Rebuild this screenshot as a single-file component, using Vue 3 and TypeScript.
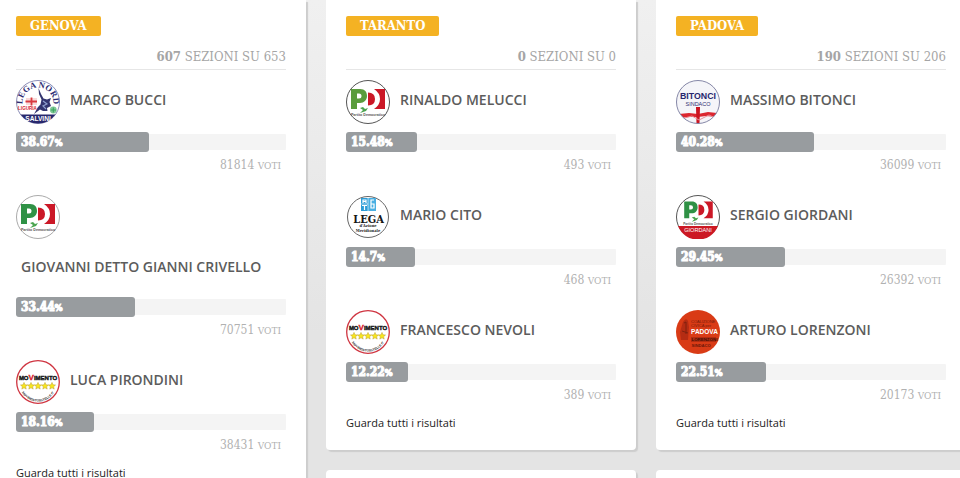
<script setup lang="ts">
type Logo = 'lega-nord' | 'pd' | 'pd-dark' | 'm5s' | 'lam' | 'bitonci' | 'giordani' | 'lorenzoni'

interface Candidate {
  name: string
  logo: Logo
  percent: number
  votes: number
}

interface City {
  name: string
  counted: number
  total: number
  candidates: Candidate[]
}

const cities: City[] = [
  {
    name: 'GENOVA',
    counted: 607,
    total: 653,
    candidates: [
      { name: 'MARCO BUCCI', logo: 'lega-nord', percent: 38.67, votes: 81814 },
      { name: 'GIOVANNI DETTO GIANNI CRIVELLO', logo: 'pd', percent: 33.44, votes: 70751 },
      { name: 'LUCA PIRONDINI', logo: 'm5s', percent: 18.16, votes: 38431 },
    ],
  },
  {
    name: 'TARANTO',
    counted: 0,
    total: 0,
    candidates: [
      { name: 'RINALDO MELUCCI', logo: 'pd-dark', percent: 15.48, votes: 493 },
      { name: 'MARIO CITO', logo: 'lam', percent: 14.7, votes: 468 },
      { name: 'FRANCESCO NEVOLI', logo: 'm5s', percent: 12.22, votes: 389 },
    ],
  },
  {
    name: 'PADOVA',
    counted: 190,
    total: 206,
    candidates: [
      { name: 'MASSIMO BITONCI', logo: 'bitonci', percent: 40.28, votes: 36099 },
      { name: 'SERGIO GIORDANI', logo: 'giordani', percent: 29.45, votes: 26392 },
      { name: 'ARTURO LORENZONI', logo: 'lorenzoni', percent: 22.51, votes: 20173 },
    ],
  },
]

const starPath = 'M0-3.6 1 -1.2 3.5 -1 1.6 .7 2.2 3.1 0 1.8 -2.2 3.1 -1.6 .7 -3.5 -1 -1 -1.2Z'
</script>

<template>
  <main class="board">
    <div v-for="city in cities" :key="city.name" class="column">
      <section class="card">
        <h2 class="badge">{{ city.name }}</h2>
        <p class="sections"><strong>{{ city.counted }}</strong> SEZIONI SU {{ city.total }}</p>

        <article v-for="c in city.candidates" :key="c.name" class="candidate">
          <header class="who">
            <svg class="logo" viewBox="0 0 44 44" aria-hidden="true">
              <defs>
                <clipPath :id="`disc-${c.logo}`"><circle cx="22" cy="22" r="21.5" /></clipPath>
              </defs>

              <g v-if="c.logo === 'lega-nord'">
                <circle cx="22" cy="22" r="21.5" fill="#fff" stroke="#8d8fb8" />
                <path id="arc-lega" d="M6.8 26A15.5 15.5 0 1 1 37.2 26" fill="none" />
                <text class="serif" font-size="8.5" font-weight="700" fill="#2c2b72" text-anchor="middle">
                  <textPath href="#arc-lega" startOffset="50%">LEGA NORD</textPath>
                </text>
                <path
                  d="M22.5 8 25 14 27.500 18.500 31 19.500 35 18 33.500 22 35 26 31 28 31.500 31 27 31 24 29.500 18 34 22 27 24.500 24.500 25.500 19.500 23 14Z"
                  fill="#33356f"
                />
                <path d="M27 21 31 24 27 26 30 29" fill="none" stroke="#8fa0cf" stroke-width="1.2" />
                <rect x="10" y="18" width="11" height="7" fill="#f8dada" />
                <path d="M15.5 17.500V25.500M9.500 21.500H21" stroke="#d93a40" stroke-width="1.8" />
                <text class="sans" x="11.500" y="30.300" font-size="4.600" font-weight="700" fill="#d6222b" text-anchor="middle">LIGURIA</text>
                <circle cx="37.300" cy="30" r="3.400" fill="#7fc796" />
                <path d="M37.300 27.500V32.500M35 30H40" stroke="#38a45c" stroke-width="1" />
                <path d="M4.500 34.500H39.500A21.500 21.500 0 0 1 4.500 34.500Z" fill="#28286d" />
                <text class="sans" x="22" y="41" font-size="6.600" font-weight="700" fill="#fff" text-anchor="middle">SALVINI</text>
              </g>

              <g v-else-if="c.logo === 'pd' || c.logo === 'pd-dark' || c.logo === 'giordani'">
                <circle cx="22" cy="22" r="21.500" fill="#fff" :stroke="c.logo === 'pd' ? '#aaa' : '#555'" />
                <g :transform="c.logo === 'giordani' ? 'translate(4 -1) scale(.84)' : undefined">
                  <path
                    d="M5 9H14C19 9 21 12 21 16S18 23 14 23H11V29H5ZM11 13.500V18.500H13Q15.500 18.500 15.500 16T13 13.500Z"
                    :fill="c.logo === 'pd-dark' ? '#5a9c3c' : '#2f9145'" fill-rule="evenodd"
                  />
                  <path d="M22 12.500Q29 12.500 29 19T22 25.500Z" fill="#cb1827" />
                  <path d="M28 9H39V29H28Q34 25 34 19T28 9Z" fill="#cb1827" />
                  <path d="M14 33 17 30 14 28 17 27 19 29 22 28 20 31 17 32Z" fill="#4ba44f" />
                </g>
                <text
                  class="sans" x="22" :y="c.logo === 'giordani' ? 29.500 : 36"
                  :font-size="c.logo === 'giordani' ? 3.100 : 3.600" font-weight="700" fill="#555" text-anchor="middle"
                >Partito Democratico</text>
                <g v-if="c.logo === 'giordani'">
                  <path d="M2 31H42A21.500 21.500 0 0 1 2 31Z" fill="#cc1823" />
                  <text class="sans" x="22" y="37" font-size="5.600" fill="#fff" text-anchor="middle">GIORDANI</text>
                </g>
              </g>

              <g v-else-if="c.logo === 'm5s'">
                <circle cx="22" cy="22" r="21.300" fill="#fff" stroke="#cf3440" stroke-width="1.300" />
                <text class="sans" x="22" y="19.500" font-size="6" font-weight="700" fill="#161616" stroke="#161616" stroke-width=".4" text-anchor="middle">MO<tspan fill="#d8222c" stroke="#d8222c" font-size="8">V</tspan>IMENTO</text>
                <path
                  v-for="i in 5" :key="i" :d="starPath" :transform="`translate(${1 + i * 7} 26)`"
                  fill="#f8e71c" stroke="#bd9d2c" stroke-width=".5"
                />
                <path id="arc-m5s" d="M5.500 32A19 19 0 0 0 38.500 32" fill="none" />
                <text class="sans" font-size="3.300" font-weight="700" fill="#333" text-anchor="middle">
                  <textPath href="#arc-m5s" startOffset="50%">MOVIMENTO5STELLE.IT</textPath>
                </text>
              </g>

              <g v-else-if="c.logo === 'lam'">
                <circle cx="22" cy="22" r="20.500" fill="#fff" stroke="#666" />
                <rect x="15" y="3" width="7" height="13" fill="#2d9cd6" />
                <rect x="22" y="3" width="8" height="13" fill="#49afe2" />
                <path d="M17 8V5H20V8M17 6.500H20M16 10.500H21M18.500 10.500V15M28 5H25V13H28V9H25" fill="none" stroke="#fff" stroke-width="1.200" />
                <path d="M15 9H22M22 3V16" stroke="#fff" stroke-width=".6" />
                <text class="slab" x="22.500" y="28" font-size="11" font-weight="700" fill="#161616" text-anchor="middle">LEGA</text>
                <text class="slab" x="22" y="32.300" font-size="4" font-weight="700" fill="#222" text-anchor="middle">d'Azione</text>
                <text class="slab" x="22" y="36.500" font-size="4" font-weight="700" fill="#222" text-anchor="middle">Meridionale</text>
              </g>

              <g v-else-if="c.logo === 'bitonci'">
                <circle cx="22" cy="22" r="21.500" fill="#f5f5f9" />
                <g clip-path="url(#disc-bitonci)">
                  <path d="M3 34 13 33 22 34 32 32 41 33V37L30 36 22 37 13 37 4 38Z" fill="#dc2730" />
                  <path d="M20 27H24L23.500 44H20.500Z" fill="#cb1420" />
                  <path d="M5 39 16 36 23 40 33 35 39 38" fill="none" stroke="#e88f96" stroke-width="1" />
                </g>
                <text class="sans" x="22" y="19" font-size="8.800" font-weight="700" fill="#26266e" text-anchor="middle">BITONCI</text>
                <text class="sans" x="22" y="25.500" font-size="5.500" fill="#2f3172" text-anchor="middle">SINDACO</text>
                <circle cx="22" cy="22" r="21.500" fill="none" stroke="#8587a7" />
              </g>

              <g v-else>
                <circle cx="22" cy="22" r="22" fill="#d93b16" />
                <path d="M7 12Q10 7 12 11L13 17 12 30H5L4 22Z" fill="#b52c13" />
                <path d="M8 13 10 12 10 24M6 21 12 23" fill="none" stroke="#80210f" stroke-width="1" />
                <text class="sans" x="15" y="13" font-size="4" fill="#761b0c">COALIZIONE</text>
                <text class="sans" x="15" y="17" font-size="4" fill="#761b0c">CIVICA per</text>
                <text class="sans" x="28.500" y="24" font-size="6.500" font-weight="700" fill="#fff" text-anchor="middle">PADOVA</text>
                <rect x="15" y="27" width="25" height="5" fill="#b32d11" />
                <text class="sans" x="15.500" y="31.300" font-size="4.400" font-weight="700" fill="#431008">LORENZONI</text>
                <text class="sans" x="15.500" y="36.500" font-size="4.200" font-weight="700" fill="#6b170b">SINDACO</text>
              </g>
            </svg>
            <h3 class="name">{{ c.name }}</h3>
          </header>
          <div class="track">
            <div class="fill" :style="{ width: c.percent + '%' }">{{ c.percent }}<small>%</small></div>
          </div>
          <p class="votes">{{ c.votes }} <small>VOTI</small></p>
        </article>

        <a class="more" href="#">Guarda tutti i risultati</a>
      </section>
      <section class="card next"></section>
    </div>
  </main>
</template>

<style>
body {
  margin: 0;
  background: #e5e5e5;
}
</style>

<style scoped>
.board {
  display: grid;
  grid-template-columns: repeat(3, minmax(0, 1fr));
  column-gap: 20px;
  height: 100vh;
  margin: 0 -6px 0 -4px;
  overflow: hidden;
  background: linear-gradient(#f0f0f0, #e4e4e4 70%);
  font-family: "Open Sans", "Noto Sans", sans-serif;
}

.column {
  display: flex;
  flex-direction: column;
  gap: 20px;
  min-height: 0;
}

.card {
  flex: none;
  padding: 16px 20px 17px;
  border-radius: 0 0 4px 4px;
  background: #fff;
  box-shadow: 2px 2px 1px #cdcdcd;
}

.next {
  flex: 1 0 100px;
  border-radius: 4px;
}

.badge,
.sections,
.fill,
.votes,
.slab {
  font-family: "DejaVu Serif Condensed", "DejaVu Serif", serif;
}

.badge {
  width: fit-content;
  margin: 0;
  padding: 0 14px;
  border-radius: 2px;
  background: #f4b223;
  color: #fff;
  font-size: 13px;
  font-weight: 700;
  line-height: 20px;
}

.sections {
  margin: 9px 0 10px;
  border-bottom: 1px solid #e6e6e6;
  color: #a5a5a5;
  font-size: 13px;
  line-height: 24px;
  text-align: right;
}

.candidate {
  margin-bottom: 20px;
}

.candidate:last-of-type {
  margin-bottom: 8px;
}

.who {
  display: flex;
  flex-wrap: wrap;
}

.logo {
  flex: none;
  width: 44px;
  height: 44px;
  margin: 0 5px 8px 0;
}

.name {
  margin: 0 0 10px;
  padding: 0 5px;
  color: #5c5c5c;
  font-size: 14px;
  font-weight: 600;
  line-height: 40px;
}

.track {
  display: flex;
  align-items: center;
  height: 20px;
  border-radius: 4px;
  background: linear-gradient(#f4f4f4, #f4f4f4) center / 100% 16px no-repeat;
}

.fill {
  box-sizing: content-box;
  padding: 0 24px 0 5px;
  border-radius: 3px;
  background: #989c9f;
  color: #fff;
  font-size: 12px;
  font-weight: 700;
  line-height: 20px;
  white-space: nowrap;
  -webkit-text-stroke: 1px #fff;
}

.fill small {
  font-size: 9px;
  line-height: 1;
}

.votes {
  margin: 3px 0 0;
  padding-right: 5px;
  color: #b1b1b1;
  font-size: 12px;
  line-height: 20px;
  text-align: right;
}

.votes small {
  font-size: 10px;
  line-height: 1;
}

.more {
  display: block;
  color: #222;
  font-size: 11px;
  line-height: 20px;
  text-decoration: none;
}

.serif {
  font-family: "Liberation Serif", serif;
}

.sans {
  font-family: "Liberation Sans", sans-serif;
}
</style>
